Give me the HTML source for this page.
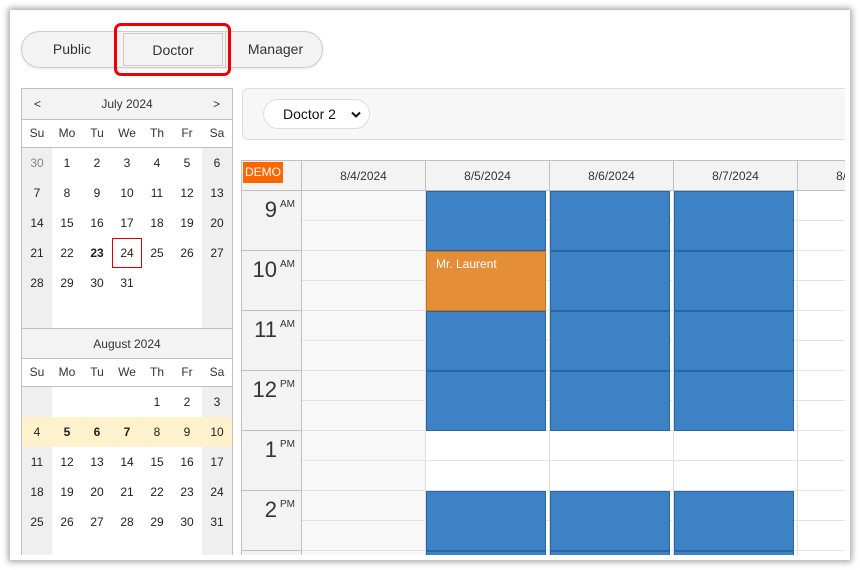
<!DOCTYPE html>
<html><head><meta charset="utf-8"><style>
*{box-sizing:border-box;margin:0;padding:0}
body{width:860px;height:570px;background:#fff;font-family:"Liberation Sans",sans-serif;font-size:13px;color:#333;position:relative;overflow:hidden}
.frame{position:absolute;left:10px;top:10px;width:840px;height:550px;background:#fff;box-shadow:0 0 6px 2px rgba(0,0,0,.35);overflow:hidden}
.clip{position:absolute;left:0;top:0;width:835px;height:545px;overflow:hidden}
.abs{position:absolute}
.tabs{left:11px;top:21px;width:302px;height:37px;border:1px solid #ccc;border-radius:19px;background:#f3f3f3;box-shadow:0 1px 3px rgba(0,0,0,.1)}
.tab{position:absolute;top:0;height:35px;line-height:35px;text-align:center;font-size:14px;color:#333}
.sel{left:101px;width:100px;border:1px solid #ccc;top:1px;height:33px;line-height:33px}
.redbox{left:104px;top:13px;width:117px;height:53px;border:3px solid #e00;border-radius:7px}
.nav{left:11px;top:78px;width:212px;height:470px;border:1px solid #c0c0c0;border-bottom:none;background:#fff;overflow:hidden}
.mh{height:31px;background:#f3f3f3;border-bottom:1px solid #c0c0c0;text-align:center;line-height:31px;font-size:12px;color:#333;position:relative}
.dn{height:28px;border-bottom:1px solid #c0c0c0;display:grid;grid-template-columns:repeat(7,30px);line-height:27px;font-size:12px;text-align:center}
.g{display:grid;grid-template-columns:repeat(7,30px);grid-auto-rows:30px;text-align:center;line-height:30px;font-size:12px;color:#222}
.g div:nth-child(7n+1),.g div:nth-child(7n){background:#efefef}
.g .o{color:#888}
.g .b{font-weight:bold}
.g .hl{background:#fdf2cc!important}
.g .t{outline:1px solid #d00;outline-offset:-1px}
.tb{left:232px;top:78px;width:620px;height:52px;background:#f7f7f7;border:1px solid #ddd;border-radius:6px}
.selb{left:20px;top:10px;width:107px;height:30px;border:1px solid #ddd;border-radius:15px;background:#fff;font-size:14px;line-height:28px;padding-left:19px;color:#111}
.cal{left:231px;top:150px;width:620px;height:400px;overflow:hidden;border-left:1px solid #c0c0c0;border-top:1px solid #c0c0c0}
.hd{position:absolute;top:0;height:30px;background:#f3f3f3;border-right:1px solid #c0c0c0;border-bottom:1px solid #c0c0c0;text-align:center;line-height:30px;font-size:12px}
.rh{position:absolute;left:0;width:60px;height:60px;background:#f3f3f3;border-right:1px solid #c0c0c0;border-bottom:1px solid #c0c0c0;text-align:right;padding-right:6px;padding-top:6px;font-size:22px;color:#333}
.rh sup{font-size:10px;vertical-align:top;position:relative;top:2px;margin-left:3px}
.ev{position:absolute;width:120px;height:60px;background:#3d82c5;border:1px solid #2a64a3}
</style></head><body>
<div class="frame"><div class="clip">
 <div class="abs tabs">
  <div class="tab" style="left:0;width:100px">Public</div>
  <div class="tab sel">Doctor</div>
  <div class="tab" style="left:203px;width:100px;border-left:1px solid #ccc">Manager</div>
 </div>
 <div class="abs redbox"></div>

 <div class="abs nav">
  <div class="mh"><span style="position:absolute;left:12px">&lt;</span>July 2024<span style="position:absolute;right:12px">&gt;</span></div>
  <div class="dn"><div>Su</div><div>Mo</div><div>Tu</div><div>We</div><div>Th</div><div>Fr</div><div>Sa</div></div>
  <div class="g">
   <div class="o">30</div><div>1</div><div>2</div><div>3</div><div>4</div><div>5</div><div>6</div>
   <div>7</div><div>8</div><div>9</div><div>10</div><div>11</div><div>12</div><div>13</div>
   <div>14</div><div>15</div><div>16</div><div>17</div><div>18</div><div>19</div><div>20</div>
   <div>21</div><div>22</div><div class="b">23</div><div class="t">24</div><div>25</div><div>26</div><div>27</div>
   <div>28</div><div>29</div><div>30</div><div>31</div><div></div><div></div><div></div>
   <div></div><div></div><div></div><div></div><div></div><div></div><div></div>
  </div>
  <div class="mh" style="border-top:1px solid #c0c0c0;height:31px">August 2024</div>
  <div class="dn"><div>Su</div><div>Mo</div><div>Tu</div><div>We</div><div>Th</div><div>Fr</div><div>Sa</div></div>
  <div class="g">
   <div></div><div></div><div></div><div></div><div>1</div><div>2</div><div>3</div>
   <div class="hl">4</div><div class="hl b">5</div><div class="hl b">6</div><div class="hl b">7</div><div class="hl">8</div><div class="hl">9</div><div class="hl">10</div>
   <div>11</div><div>12</div><div>13</div><div>14</div><div>15</div><div>16</div><div>17</div>
   <div>18</div><div>19</div><div>20</div><div>21</div><div>22</div><div>23</div><div>24</div>
   <div>25</div><div>26</div><div>27</div><div>28</div><div>29</div><div>30</div><div>31</div>
   <div></div><div></div><div></div><div></div><div></div><div></div><div></div>
  </div>
 </div>

 <div class="abs tb"><div class="abs selb">Doctor 2 <svg style="position:absolute;right:8px;top:11px" width="10" height="7" viewBox="0 0 10 7"><path d="M1 1.5L5 5.5L9 1.5" fill="none" stroke="#111" stroke-width="2"/></svg></div></div>

 <div class="abs cal">
  <div class="hd" style="left:0;width:60px"><span style="position:absolute;left:1px;top:1px;background:#f60;color:#fff;height:21px;line-height:21px;padding:0 2px;font-size:12px">DEMO</span></div>
  <div class="hd" style="left:60px;width:124px">8/4/2024</div>
  <div class="hd" style="left:184px;width:124px">8/5/2024</div>
  <div class="hd" style="left:308px;width:124px">8/6/2024</div>
  <div class="hd" style="left:432px;width:124px">8/7/2024</div>
  <div class="hd" style="left:556px;width:124px">8/8/2024</div>

  <div class="rh" style="top:30px">9<sup>AM</sup></div>
  <div class="rh" style="top:90px">10<sup>AM</sup></div>
  <div class="rh" style="top:150px">11<sup>AM</sup></div>
  <div class="rh" style="top:210px">12<sup>PM</sup></div>
  <div class="rh" style="top:270px">1<sup>PM</sup></div>
  <div class="rh" style="top:330px">2<sup>PM</sup></div>
  <div class="rh" style="top:390px">3<sup>PM</sup></div>

  <div style="position:absolute;left:60px;top:30px;width:124px;height:400px;background:#f8f8f8"></div>
  <div style="position:absolute;left:60px;top:30px;width:620px;height:400px;
   background-image:repeating-linear-gradient(to bottom,transparent 0,transparent 29px,#e3e3e3 29px,#e3e3e3 30px),
   repeating-linear-gradient(to right,transparent 0,transparent 123px,#ddd 123px,#ddd 124px)"></div>

  <div class="ev" style="left:184px;top:30px"></div>
  <div class="ev" style="left:184px;top:90px;background:#e48e38;border-color:#c7701f;color:#fff;padding:5px 9px;font-size:12px">Mr. Laurent</div>
  <div class="ev" style="left:184px;top:150px"></div>
  <div class="ev" style="left:184px;top:210px"></div>
  <div class="ev" style="left:184px;top:330px"></div>
  <div class="ev" style="left:184px;top:390px"></div>
  <div class="ev" style="left:308px;top:30px"></div>
  <div class="ev" style="left:308px;top:90px"></div>
  <div class="ev" style="left:308px;top:150px"></div>
  <div class="ev" style="left:308px;top:210px"></div>
  <div class="ev" style="left:308px;top:330px"></div>
  <div class="ev" style="left:308px;top:390px"></div>
  <div class="ev" style="left:432px;top:30px"></div>
  <div class="ev" style="left:432px;top:90px"></div>
  <div class="ev" style="left:432px;top:150px"></div>
  <div class="ev" style="left:432px;top:210px"></div>
  <div class="ev" style="left:432px;top:330px"></div>
  <div class="ev" style="left:432px;top:390px"></div>
 </div>
</div></div>
</body></html>
